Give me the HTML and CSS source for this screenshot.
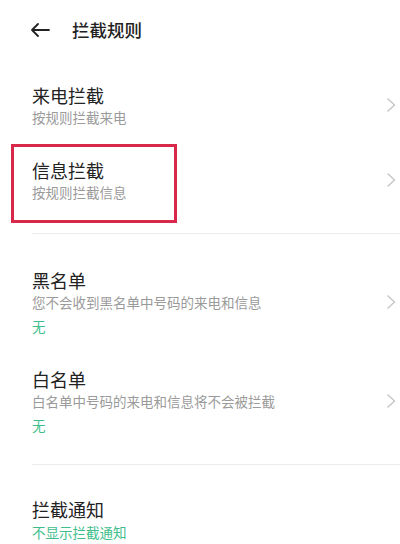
FILE: index.html
```html
<!DOCTYPE html>
<html lang="zh-CN">
<head>
    <meta charset="UTF-8">
    <meta name="viewport" content="width=device-width, initial-scale=1.0">
    <title>拦截规则</title>
    <link rel="stylesheet" href="styles.css">
</head>
<body>
    <header class="top-bar">
        <span class="back">
            <svg width="20" height="14" viewBox="0 0 20 14">
                <path d="M19 7H2M8 1L2 7L8 13" fill="none" stroke="#222" stroke-width="1.8" stroke-linecap="round" stroke-linejoin="round"/>
            </svg>
        </span>
        <h1>拦截规则</h1>
    </header>

    <div class="group first">
        <div class="item">
            <div class="text">
                <div class="title">来电拦截</div>
                <div class="sub">按规则拦截来电</div>
            </div>
            <span class="arrow"><svg width="10" height="16" viewBox="0 0 10 16"><path d="M1.5 1.5L8.5 8L1.5 14.5" fill="none" stroke="#c6c6c6" stroke-width="1.4"/></svg></span>
        </div>
        <div class="item marked">
            <span class="mark"></span>
            <div class="text">
                <div class="title">信息拦截</div>
                <div class="sub">按规则拦截信息</div>
            </div>
            <span class="arrow"><svg width="10" height="16" viewBox="0 0 10 16"><path d="M1.5 1.5L8.5 8L1.5 14.5" fill="none" stroke="#c6c6c6" stroke-width="1.4"/></svg></span>
        </div>
    </div>

    <div class="divider"></div>

    <div class="group second">
        <div class="item">
            <div class="text">
                <div class="title">黑名单</div>
                <div class="sub">您不会收到黑名单中号码的来电和信息</div>
                <div class="value">无</div>
            </div>
            <span class="arrow"><svg width="10" height="16" viewBox="0 0 10 16"><path d="M1.5 1.5L8.5 8L1.5 14.5" fill="none" stroke="#c6c6c6" stroke-width="1.4"/></svg></span>
        </div>
        <div class="item">
            <div class="text">
                <div class="title">白名单</div>
                <div class="sub">白名单中号码的来电和信息将不会被拦截</div>
                <div class="value">无</div>
            </div>
            <span class="arrow"><svg width="10" height="16" viewBox="0 0 10 16"><path d="M1.5 1.5L8.5 8L1.5 14.5" fill="none" stroke="#c6c6c6" stroke-width="1.4"/></svg></span>
        </div>
    </div>

    <div class="divider"></div>

    <div class="group third">
        <div class="item">
            <div class="text">
                <div class="title">拦截通知</div>
                <div class="sub green">不显示拦截通知</div>
            </div>
        </div>
    </div>
</body>
</html>
```

FILE: styles.css
```css
body {
    margin: 0;
    padding: 0;
    background: #fff;
    color: #222;
    font-family: "Noto Sans CJK SC", "Noto Sans", sans-serif;
    overflow: hidden;
}

.top-bar {
    height: 60px;
    display: flex;
    align-items: center;
    padding-left: 30px;
}

.back {
    display: flex;
    width: 20px;
    margin-right: 22px;
    margin-top: -1px;
}

.top-bar h1 {
    margin: 0;
    font-size: 17.5px;
    font-weight: 500;
    line-height: 24px;
}

.group.first {
    padding: 7px 0 16px;
}

.group.second {
    padding: 18px 0 14px;
}

.group.third {
    padding: 16px 0 0;
}

.item {
    display: flex;
    align-items: center;
    padding: 16px 4px 16px 32px;
}

.item.marked {
    position: relative;
}

.mark {
    position: absolute;
    left: 11px;
    top: 2px;
    width: 160px;
    height: 73px;
    border: 3px solid #d8294a;
}

.text {
    flex: 1;
}

.title {
    font-size: 18px;
    font-weight: 400;
    line-height: 24px;
}

.sub {
    margin-top: 1px;
    font-size: 13.5px;
    line-height: 18px;
    color: #9a9a9a;
}

.sub.green {
    margin-top: 2px;
    color: #3dbe8b;
}

.value {
    margin-top: 6px;
    font-size: 13.5px;
    line-height: 18px;
    color: #3dbe8b;
}

.arrow {
    display: flex;
    width: 10px;
}

.divider {
    height: 1px;
    margin-left: 32px;
    background: #ededed;
}
```
